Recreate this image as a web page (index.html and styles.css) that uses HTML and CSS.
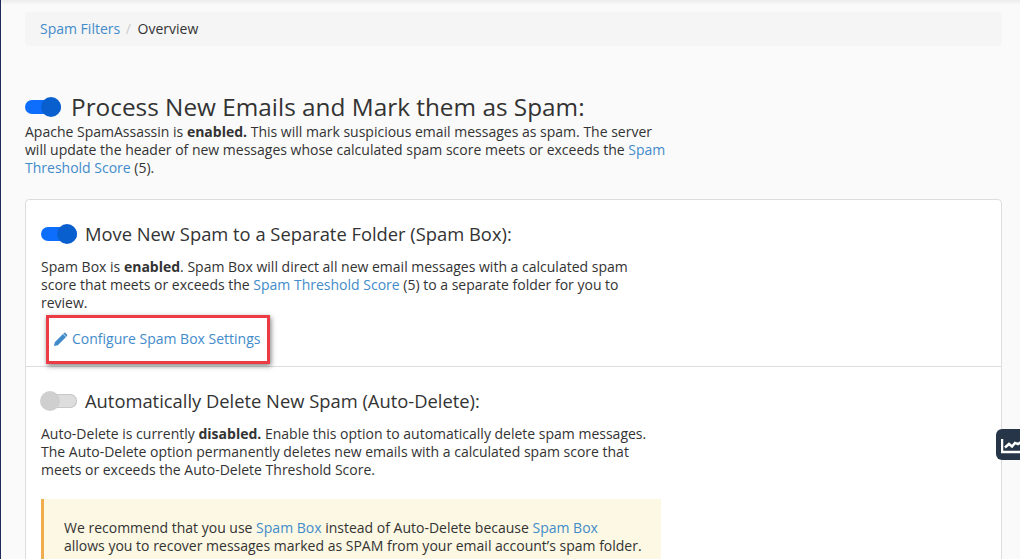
FILE: index.html
```html
<!DOCTYPE html>
<html lang="en">
<head>
    <meta charset="UTF-8">
    <title>Spam Filters</title>
    <link rel="stylesheet" href="styles.css">
</head>
<body>
    <div class="topbar"></div>
    <div class="page">
        <div class="breadcrumb">
            <a href="#">Spam Filters</a>
            <span class="sep">/</span>
            <span>Overview</span>
        </div>

        <div class="intro">
            <h1 class="title-row">
                <span class="toggle on"></span>
                Process New Emails and Mark them as Spam:
            </h1>
            <p>Apache SpamAssassin is <b>enabled.</b> This will mark suspicious email messages as spam. The server will update the header of new messages whose calculated spam score meets or exceeds the <a href="#">Spam Threshold Score</a> (5).</p>
        </div>

        <div class="card">
            <div class="section first">
                <h2 class="title-row">
                    <span class="toggle on"></span>
                    Move New Spam to a Separate Folder (Spam Box):
                </h2>
                <p>Spam Box is <b>enabled</b>. Spam Box will direct all new email messages with a calculated spam score that meets or exceeds the <a href="#">Spam Threshold Score</a> (5) to a separate folder for you to review.</p>
                <div class="callout">
                    <a href="#">
                        <svg class="pencil" viewBox="0 0 16 16" width="15" height="15">
                            <path d="M1 15l.9-4.200L10.600 2.100l3.300 3.300-8.700 8.700zM11.600 1.100c.5-.5 1.200-.5 1.700 0l1.600 1.600c.5.5.5 1.200 0 1.700l-.6.6-3.300-3.300z"/>
                        </svg>
                        Configure Spam Box Settings
                    </a>
                </div>
            </div>
            <div class="section">
                <h2 class="title-row">
                    <span class="toggle off"></span>
                    Automatically Delete New Spam (Auto-Delete):
                </h2>
                <p>Auto-Delete is currently <b>disabled.</b> Enable this option to automatically delete spam messages. The Auto-Delete option permanently deletes new emails with a calculated spam score that meets or exceeds the Auto-Delete Threshold Score.</p>
                <div class="notice">
                    We recommend that you use <a href="#">Spam Box</a> instead of Auto-Delete because <a href="#">Spam Box</a><br>
                    allows you to recover messages marked as SPAM from your email account’s spam folder.
                </div>
            </div>
        </div>
    </div>

    <div class="stats-tab">
        <svg viewBox="0 0 20 16" width="20" height="16">
            <path class="axis" d="M1 1v13h18"/>
            <path class="line" d="M4 9.500l4-3.500 3 2.500 3-3.500 3 1 3-2"/>
        </svg>
    </div>
</body>
</html>
```

FILE: styles.css
```css
html, body {
    height: 100%;
}

body {
    margin: 0;
    background-color: #fafafa;
    color: #333;
    font-family: 'Open Sans', sans-serif;
    font-size: 14px;
    line-height: 18px;
    border-left: 1px solid #1f2a5a;
    overflow: hidden;
}

a {
    color: #428bca;
    text-decoration: none;
}

p {
    margin: 0;
}

.topbar {
    height: 1px;
    background-color: #eee;
    box-shadow: 0 1px 3px rgba(0, 0, 0, 0.15);
}

.page {
    padding: 11px 18px 0 24px;
}

.breadcrumb {
    background-color: #f5f5f5;
    border-radius: 4px;
    height: 34px;
    line-height: 34px;
    padding: 0 15px;
}

.sep {
    color: #ccc;
    padding: 0 3px 0 2px;
}

.intro {
    margin-top: 48px;
    width: 645px;
}

.title-row {
    display: flex;
    align-items: center;
    font-weight: 400;
    margin: 0;
}

.intro h1 {
    font-size: 24.35px;
    line-height: 26px;
    margin-bottom: 3px;
}

.intro .toggle {
    margin-right: 10px;
}

.section h2 {
    font-size: 18.35px;
    line-height: 20px;
    margin-bottom: 14px;
}

.toggle {
    position: relative;
    display: inline-block;
    flex: none;
    width: 36px;
    height: 14px;
    border-radius: 7px;
    margin-right: 8px;
}

.toggle::after {
    content: "";
    position: absolute;
    top: -3px;
    width: 20px;
    height: 20px;
    border-radius: 50%;
}

.toggle.on {
    background-color: #0d6efd;
}

.toggle.on::after {
    right: 0;
    background-color: #0a5fcf;
}

.toggle.off {
    background-color: #ddd;
    box-shadow: inset 0 0 0 1px #c8c8c8;
}

.toggle.off::after {
    left: -1px;
    background-color: #cfcfcf;
}

.card {
    margin-top: 22px;
    background-color: #fff;
    border: 1px solid #ddd;
    border-radius: 4px;
    height: 500px;
}

.section {
    padding: 24px 15px 0;
    border-top: 1px solid #ddd;
}

.section.first {
    border-top: 0;
    height: 142px;
}

.section p {
    width: 612px;
}

.callout {
    display: inline-block;
    margin: 3px 0 0 5px;
    padding: 11px 7px 12px 4px;
    border: 3px solid #ed3b46;
    box-shadow: 1px 2px 5px rgba(0, 0, 0, 0.5);
}

.callout a {
    display: flex;
    align-items: center;
    gap: 4px;
    line-height: 20px;
}

.pencil {
    fill: #428bca;
}

.notice {
    margin-top: 20px;
    width: 587px;
    padding: 20px 10px 0 20px;
    height: 100px;
    background-color: #fcf8e3;
    border-left: 3px solid #f0ad4e;
}

.stats-tab {
    position: absolute;
    top: 429px;
    right: 0;
    width: 19px;
    height: 31px;
    padding-left: 5px;
    display: flex;
    align-items: center;
    overflow: hidden;
    background-color: #263648;
    border-radius: 6px 0 0 6px;
}

.stats-tab svg {
    flex: none;
    margin-top: 2px;
}

.axis, .line {
    fill: none;
    stroke: #fff;
    stroke-width: 2.5;
}
```
